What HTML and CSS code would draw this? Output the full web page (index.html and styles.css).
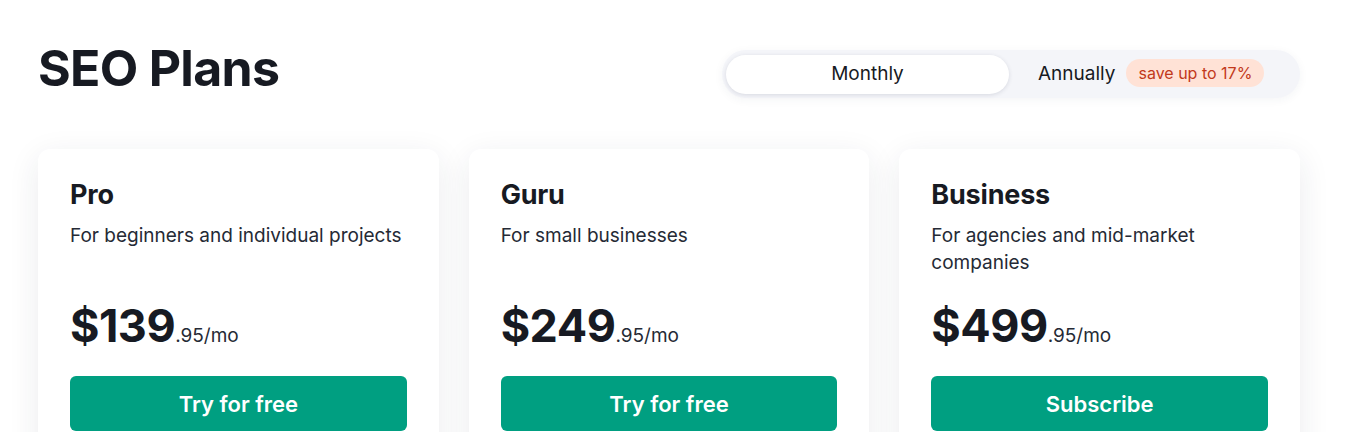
FILE: index.html
```html
<!DOCTYPE html>
<html lang="en">
<head>
<meta charset="utf-8">
<title>SEO Plans</title>
<link rel="stylesheet" href="styles.css">
</head>
<body>
<main class="page">
  <header class="head">
    <h1 class="title">SEO Plans</h1>
    <div class="toggle">
      <button class="opt opt-active">Monthly</button>
      <button class="opt opt-annual">Annually <span class="badge">save up to 17%</span></button>
    </div>
  </header>
  <section class="cards">
    <article class="card">
      <h2 class="plan">Pro</h2>
      <p class="desc">For beginners and individual projects</p>
      <div class="price"><span class="big">$139</span><span class="small">.95/mo</span></div>
      <a class="btn" href="#">Try for free</a>
    </article>
    <article class="card">
      <h2 class="plan">Guru</h2>
      <p class="desc">For small businesses</p>
      <div class="price"><span class="big">$249</span><span class="small">.95/mo</span></div>
      <a class="btn" href="#">Try for free</a>
    </article>
    <article class="card">
      <h2 class="plan">Business</h2>
      <p class="desc">For agencies and mid-market companies</p>
      <div class="price"><span class="big">$499</span><span class="small">.95/mo</span></div>
      <a class="btn" href="#">Subscribe</a>
    </article>
  </section>
</main>
</body>
</html>
```
FILE: styles.css
```css
* { box-sizing: border-box; }
html, body { margin: 0; background: #fff; }
body {
  font-family: Inter, "Noto Sans", Arial, sans-serif;
  color: #171a22;
  overflow: hidden;
}
.page {
  padding: 37px 71px 0 38px;
}
.head {
  display: flex;
  justify-content: space-between;
  align-items: flex-start;
  height: 112px;
}
.title {
  margin: 0;
  font-size: 50px;
  line-height: 62px;
  font-weight: 700;
  letter-spacing: -0.7px;
}
.toggle {
  margin-top: 13px;
  display: flex;
  align-items: center;
  width: 578px;
  height: 48px;
  padding: 4px;
  border-radius: 24px;
  background: #f4f5f9;
  box-shadow: 0 2px 10px rgba(40, 50, 80, 0.05);
}
.opt {
  border: 0;
  background: none;
  font-family: inherit;
  font-size: 19px;
  color: #171a22;
  padding: 0 0 2px;
  height: 39px;
  display: flex;
  align-items: center;
}
.opt-active {
  width: 283px;
  justify-content: center;
  background: #fff;
  border-radius: 20px;
  box-shadow: 0 1px 4px rgba(40, 50, 80, 0.14);
}
.opt-annual {
  padding-left: 29px;
  gap: 11px;
}
.badge {
  display: inline-flex;
  align-items: center;
  height: 28px;
  padding: 0 12px;
  border-radius: 14px;
  background: #ffe2d6;
  color: #c2391b;
  font-size: 16px;
}
.cards {
  display: grid;
  grid-template-columns: repeat(3, 1fr);
  gap: 30px;
}
.card {
  background: #fff;
  border-radius: 12px;
  padding: 27px 32px 32px;
  box-shadow: 0 8px 32px rgba(30, 40, 70, 0.09);
  display: flex;
  flex-direction: column;
}
.plan {
  margin: 0;
  font-size: 27px;
  line-height: 38px;
  font-weight: 700;
  letter-spacing: -0.2px;
}
.desc {
  margin: 8px 0 0;
  font-size: 19px;
  line-height: 27px;
  color: #252a35;
  min-height: 54px;
}
.price {
  margin-top: 22px;
  display: flex;
  align-items: baseline;
  height: 56px;
}
.big {
  font-size: 45px;
  font-weight: 700;
  letter-spacing: -0.5px;
}
.small {
  font-size: 19px;
  color: #252a35;
}
.btn {
  margin-top: 22px;
  height: 55px;
  border-radius: 6px;
  background: #009f81;
  color: #fff;
  text-decoration: none;
  display: flex;
  align-items: center;
  justify-content: center;
  font-size: 22px;
  font-weight: 600;
}
```
